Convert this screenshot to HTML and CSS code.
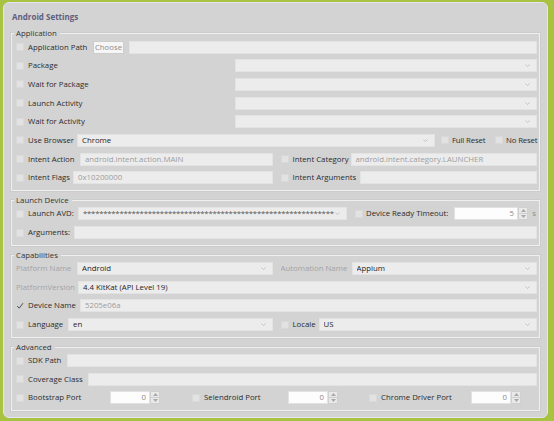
FILE: index.html
```html
<!DOCTYPE html>
<html>
<head>
<meta charset="utf-8">
<title>Android Settings</title>
<link rel="stylesheet" href="styles.css">
</head>
<body>
<div class="window">
  <div class="header">Android Settings</div>

  <section class="group g-app">
    <div class="legend">Application</div>
    <div class="rows">
      <div class="row">
        <span class="lead w-path"><i class="cb"></i>Application Path</span>
        <span class="btn">Choose</span>
        <span class="field"></span>
      </div>
      <div class="row">
        <span class="lead w-wide"><i class="cb"></i>Package</span>
        <span class="field select"><span class="txt"></span><svg class="caret" width="5" height="3" viewBox="0 0 5 3"><polyline points="0.5,0.5 2.5,2.5 4.5,0.5"/></svg></span>
      </div>
      <div class="row">
        <span class="lead w-wide"><i class="cb"></i>Wait for Package</span>
        <span class="field select"><span class="txt"></span><svg class="caret" width="5" height="3" viewBox="0 0 5 3"><polyline points="0.5,0.5 2.5,2.5 4.5,0.5"/></svg></span>
      </div>
      <div class="row">
        <span class="lead w-wide"><i class="cb"></i>Launch Activity</span>
        <span class="field select"><span class="txt"></span><svg class="caret" width="5" height="3" viewBox="0 0 5 3"><polyline points="0.5,0.5 2.5,2.5 4.5,0.5"/></svg></span>
      </div>
      <div class="row">
        <span class="lead w-wide"><i class="cb"></i>Wait for Activity</span>
        <span class="field select"><span class="txt"></span><svg class="caret" width="5" height="3" viewBox="0 0 5 3"><polyline points="0.5,0.5 2.5,2.5 4.5,0.5"/></svg></span>
      </div>
      <div class="row">
        <span class="lead w-browser"><i class="cb"></i>Use Browser</span>
        <span class="field select"><span class="txt">Chrome</span><svg class="caret" width="5" height="3" viewBox="0 0 5 3"><polyline points="0.5,0.5 2.5,2.5 4.5,0.5"/></svg></span>
        <span class="check w-full"><i class="cb"></i>Full Reset</span>
        <span class="check w-noreset"><i class="cb"></i>No Reset</span>
      </div>
      <div class="row two">
        <div class="half">
          <span class="lead w-iaction"><i class="cb"></i>Intent Action</span>
          <span class="field dim">android.intent.action.MAIN</span>
        </div>
        <div class="half">
          <span class="lead w-icat"><i class="cb"></i>Intent Category</span>
          <span class="field dim">android.intent.category.LAUNCHER</span>
        </div>
      </div>
      <div class="row two">
        <div class="half">
          <span class="lead w-iflags"><i class="cb"></i>Intent Flags</span>
          <span class="field dim">0x10200000</span>
        </div>
        <div class="half">
          <span class="lead w-iargs"><i class="cb"></i>Intent Arguments</span>
          <span class="field"></span>
        </div>
      </div>
    </div>
  </section>

  <section class="group g-launch">
    <div class="legend">Launch Device</div>
    <div class="rows">
      <div class="row">
        <span class="lead w-avd"><i class="cb"></i>Launch AVD:</span>
        <span class="field select"><span class="txt stars">**************************************************************</span><svg class="caret" width="5" height="3" viewBox="0 0 5 3"><polyline points="0.5,0.5 2.5,2.5 4.5,0.5"/></svg></span>
        <span class="check w-timeout"><i class="cb"></i>Device Ready Timeout:</span>
        <span class="spin w-spin-long"><span class="val">5</span><span class="arrows"><span class="up"><svg width="5" height="3" viewBox="0 0 5 3"><polygon points="0,3 2.5,0 5,3"/></svg></span><span class="down"><svg width="5" height="3" viewBox="0 0 5 3"><polygon points="0,0 2.5,3 5,0"/></svg></span></span></span>
        <span class="unit">s</span>
      </div>
      <div class="row">
        <span class="lead w-args"><i class="cb"></i>Arguments:</span>
        <span class="field"></span>
      </div>
    </div>
  </section>

  <section class="group g-caps">
    <div class="legend">Capabilities</div>
    <div class="rows">
      <div class="row two">
        <div class="half">
          <span class="lead w-pname disabled">Platform Name</span>
          <span class="field select"><span class="txt">Android</span><svg class="caret" width="5" height="3" viewBox="0 0 5 3"><polyline points="0.5,0.5 2.5,2.5 4.5,0.5"/></svg></span>
        </div>
        <div class="half">
          <span class="lead w-aname disabled">Automation Name</span>
          <span class="field select"><span class="txt">Appium</span><svg class="caret" width="5" height="3" viewBox="0 0 5 3"><polyline points="0.5,0.5 2.5,2.5 4.5,0.5"/></svg></span>
        </div>
      </div>
      <div class="row">
        <span class="lead w-pver disabled">PlatformVersion</span>
        <span class="field select"><span class="txt">4.4 KitKat (API Level 19)</span><svg class="caret" width="5" height="3" viewBox="0 0 5 3"><polyline points="0.5,0.5 2.5,2.5 4.5,0.5"/></svg></span>
      </div>
      <div class="row">
        <span class="lead w-dname"><i class="cb checked"><svg width="8" height="8" viewBox="0 0 8 8"><polyline points="1.2,4 3.2,6.2 7,1.2"/></svg></i>Device Name</span>
        <span class="field dim">5205e06a</span>
      </div>
      <div class="row two">
        <div class="half">
          <span class="lead w-lang"><i class="cb"></i>Language</span>
          <span class="field select"><span class="txt">en</span><svg class="caret" width="5" height="3" viewBox="0 0 5 3"><polyline points="0.5,0.5 2.5,2.5 4.5,0.5"/></svg></span>
        </div>
        <div class="half">
          <span class="lead w-locale"><i class="cb"></i>Locale</span>
          <span class="field select"><span class="txt">US</span><svg class="caret" width="5" height="3" viewBox="0 0 5 3"><polyline points="0.5,0.5 2.5,2.5 4.5,0.5"/></svg></span>
        </div>
      </div>
    </div>
  </section>

  <section class="group g-adv">
    <div class="legend">Advanced</div>
    <div class="rows">
      <div class="row">
        <span class="lead w-sdk"><i class="cb"></i>SDK Path</span>
        <span class="field"></span>
      </div>
      <div class="row">
        <span class="lead w-cov"><i class="cb"></i>Coverage Class</span>
        <span class="field"></span>
      </div>
      <div class="row">
        <div class="cell c1">
          <span class="lead w-boot"><i class="cb"></i>Bootstrap Port</span>
          <span class="spin w-spin"><span class="val">0</span><span class="arrows"><span class="up"><svg width="5" height="3" viewBox="0 0 5 3"><polygon points="0,3 2.5,0 5,3"/></svg></span><span class="down"><svg width="5" height="3" viewBox="0 0 5 3"><polygon points="0,0 2.5,3 5,0"/></svg></span></span></span>
        </div>
        <div class="cell c2">
          <span class="lead w-sel"><i class="cb"></i>Selendroid Port</span>
          <span class="spin w-spin"><span class="val">0</span><span class="arrows"><span class="up"><svg width="5" height="3" viewBox="0 0 5 3"><polygon points="0,3 2.5,0 5,3"/></svg></span><span class="down"><svg width="5" height="3" viewBox="0 0 5 3"><polygon points="0,0 2.5,3 5,0"/></svg></span></span></span>
        </div>
        <div class="cell c3">
          <span class="lead w-cdp"><i class="cb"></i>Chrome Driver Port</span>
          <span class="spin w-spin"><span class="val">0</span><span class="arrows"><span class="up"><svg width="5" height="3" viewBox="0 0 5 3"><polygon points="0,3 2.5,0 5,3"/></svg></span><span class="down"><svg width="5" height="3" viewBox="0 0 5 3"><polygon points="0,0 2.5,3 5,0"/></svg></span></span></span>
        </div>
      </div>
    </div>
  </section>
</div>
</body>
</html>
```

FILE: styles.css
```css
* { box-sizing: border-box; }
html, body { margin: 0; padding: 0; }
body {
  width: 554px;
  height: 421px;
  overflow: hidden;
  background: #a8c342;
  font-family: "Open Sans", "Noto Sans", sans-serif;
  font-size: 7.8px;
  color: #2b2b2b;
}
.window {
  margin: 2px 0 0 3px;
  width: 545px;
  height: 416px;
  background: #d3d3d3;
  border: 1px solid #e4e4ee;
  border-radius: 6px;
  padding: 0 7px;
}
.header {
  height: 27px;
  line-height: 28px;
  padding-left: 1px;
  font-weight: 700;
  font-size: 8px;
  color: #5e5e82;
}
.group {
  border: 1px solid #efefef;
  box-shadow: 0 0 0 1px #cccccc;
  padding: 0 2px 5.5px 4px;
  margin-top: 9px;
}
.g-app { margin-top: 3px; }
.legend {
  margin: -6px 0 0 -2px;
  height: 11px;
  line-height: 11px;
  padding: 0 3px 0 2px;
  width: fit-content;
  background: #d3d3d3;
  color: #333;
}
.rows {
  margin-top: 1.5px;
  display: flex;
  flex-direction: column;
  gap: 5.7px;
}
.row {
  display: flex;
  align-items: center;
  height: 13px;
  line-height: 13px;
}
.row.two { gap: 8px; }
.half { flex: 1; display: flex; align-items: center; min-width: 0; height: 13px; }
.lead {
  flex: none;
  display: flex;
  align-items: center;
  white-space: nowrap;
  overflow: hidden;
  height: 13px;
}
.check {
  flex: none;
  display: flex;
  align-items: center;
  white-space: nowrap;
  height: 13px;
}
.disabled { color: #a3a3a3; }
.cb {
  flex: none;
  display: inline-flex;
  width: 8px;
  height: 8px;
  margin-right: 4px;
  background: #e2e2e2;
  border: 1px solid #d9d9d9;
}
.check .cb { margin-right: 3px; }
.cb.checked { background: transparent; border-color: transparent; }
.cb svg { display: block; margin: -1px; fill: none; stroke: #505050; stroke-width: 1; }
.field {
  flex: 1;
  min-width: 0;
  display: flex;
  align-items: center;
  height: 13px;
  background: #ececec;
  border: 1px solid #e3e3e3;
  padding: 0 4px;
  line-height: 11px;
  color: #242424;
  white-space: nowrap;
  overflow: hidden;
}
.field.dim { color: #9c9c9c; }
.field .txt { flex: 1; overflow: hidden; }
.stars { color: #555; letter-spacing: -0.25px; }
.caret { flex: none; fill: none; stroke: #b9b9b9; stroke-width: 0.8; margin-right: 2px; }
.btn {
  flex: none;
  width: 31px;
  height: 13px;
  margin-right: 5px;
  background: #f6f6f6;
  border: 1px solid #cdcdcd;
  color: #8d8d8d;
  text-align: center;
  line-height: 11px;
}
.spin { flex: none; display: flex; height: 13px; }
.spin .val {
  flex: 1;
  background: #fdfdfd;
  border: 1px solid #e2e2e2;
  text-align: right;
  padding-right: 3px;
  line-height: 11px;
  color: #8a8a8a;
}
.arrows { width: 10px; display: flex; flex-direction: column; }
.arrows span {
  flex: 1;
  display: flex;
  align-items: center;
  justify-content: center;
  background: #e9e9e9;
  border: 1px solid #d0d0d0;
}
.arrows .down { border-top: none; }
.arrows svg { fill: #a8a8a8; display: block; }
.unit { flex: none; width: 9px; text-align: right; padding-right: 1px; color: #8a8a8a; }

/* lead widths (checkbox + label column) */
.w-path { width: 77px; }
.w-wide { width: 219px; }
.w-browser { width: 61px; }
.w-full { width: 54px; margin-left: 6px; }
.w-noreset { width: 42px; letter-spacing: -0.15px; }
.w-full { letter-spacing: -0.15px; }
.w-iaction { width: 64px; }
.w-iflags { width: 57px; }
.w-icat { width: 70px; }
.w-iargs { width: 79px; }
.w-avd { width: 62px; }
.w-timeout { width: 99px; margin-left: 8px; }
.w-spin-long { width: 74px; }
.w-args { width: 58px; }
.w-pname { width: 61px; }
.w-aname { width: 71px; }
.w-pver { width: 62px; }
.w-dname { width: 64px; }
.w-lang { width: 52px; }
.w-locale { width: 38px; }
.w-sdk { width: 51px; }
.w-cov { width: 72px; }
.cell { flex: none; display: flex; align-items: center; height: 13px; }
.c1 { width: 176px; }
.c2 { width: 177px; }
.c3 { width: 168px; }
.w-boot { width: 94px; }
.w-sel { width: 96px; }
.w-cdp { width: 102px; }
.w-spin { width: 50px; }
```
